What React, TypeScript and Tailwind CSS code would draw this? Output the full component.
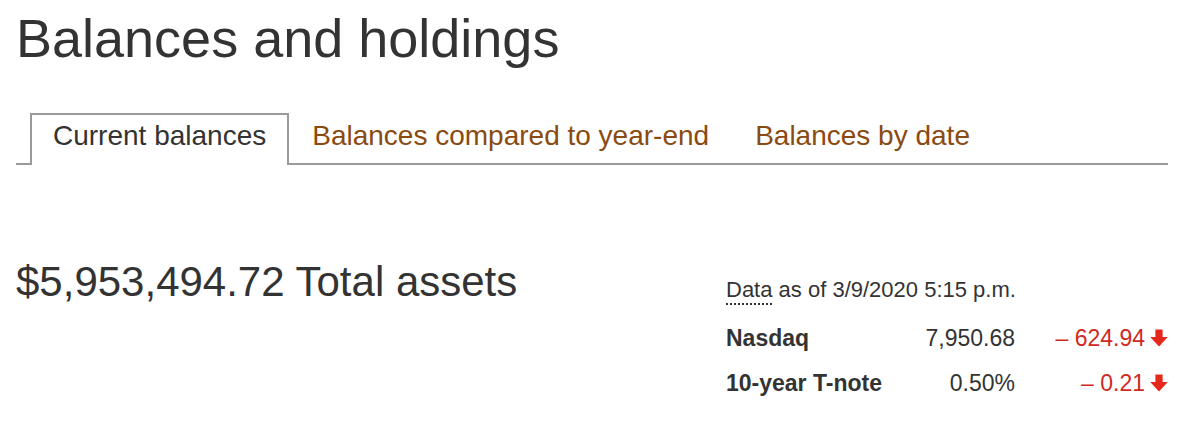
import React from 'react';

const tabs = [
  { label: 'Current balances', active: true },
  { label: 'Balances compared to year-end', active: false },
  { label: 'Balances by date', active: false },
];

const markets = [
  { name: 'Nasdaq', value: '7,950.68', change: '– 624.94' },
  { name: '10-year T-note', value: '0.50%', change: '– 0.21' },
];

const DownArrow = () => (
  <svg width="18" height="18" viewBox="0 0 16 16" className="block shrink-0" fill="#e5281b">
    <path d="M4.8 0.5h6.4v6.7h4.6L8 15.5 0.2 7.2h4.6z" />
  </svg>
);

export default function App() {
  return (
    <div className="min-h-[429px] w-[1184px] bg-white px-4 text-[#333]" style={{ fontFamily: '"Liberation Sans", Arial, sans-serif' }}>
      <h1 className="pt-[11px] text-[54px] leading-none font-normal">Balances and holdings</h1>

      {/* tab strip */}
      <div className="mt-[48px] flex border-b-2 border-[#9a9a9a] pl-[14px]">
        {tabs.map((tab) => (
          <div
            key={tab.label}
            className={`-mb-[2px] border-2 border-b-0 px-[21px] pt-[5px] pb-[13px] text-[28px] leading-[32px] ${
              tab.active ? 'border-[#9a9a9a] bg-white text-[#333]' : 'border-transparent text-[#8a4a10]'
            }`}
          >
            {tab.label}
          </div>
        ))}
      </div>

      <div className="mt-[96px] flex items-start justify-between">
        <div className="text-[42px] leading-none">$5,953,494.72 Total assets</div>

        <div className="mt-[15px] w-[442px]">
          <div className="text-[22px] leading-[28px]">
            <span className="border-b-2 border-dotted border-[#333] pb-[1px]">Data</span> as of 3/9/2020 5:15 p.m.
          </div>
          <div className="mt-[20px] grid grid-cols-[180px_109px_153px] gap-y-[17px] text-[23px] leading-[28px]">
            {markets.map((m) => (
              <React.Fragment key={m.name}>
                <div className="font-bold">{m.name}</div>
                <div className="text-right">{m.value}</div>
                <div className="flex items-center justify-end gap-[5px] text-[#cf2a1f]">
                  <span>{m.change}</span>
                  <DownArrow />
                </div>
              </React.Fragment>
            ))}
          </div>
        </div>
      </div>
    </div>
  );
}
